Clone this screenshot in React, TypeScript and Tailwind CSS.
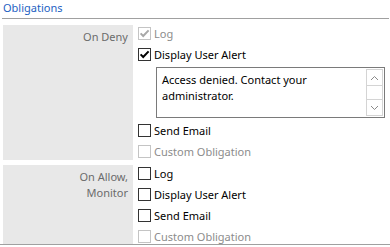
import React from 'react';

const Check: React.FC<{ checked?: boolean; disabled?: boolean; label: string }> = ({ checked, disabled, label }) => (
  <div className="flex h-[21px] items-center">
    <span
      className={`relative flex h-[13px] w-[13px] shrink-0 items-center justify-center border bg-white ${
        disabled ? 'border-[#c4c4c4]' : 'border-[#333333]'
      }`}
    >
      {checked && (
        <svg width="11" height="11" viewBox="0 0 11 11" className="absolute left-0 top-0">
          <path
            d="M1.6 5.4 L4.2 8 L9.6 2.4"
            fill="none"
            stroke={disabled ? '#a8a8a8' : '#000000'}
            strokeWidth="2"
          />
        </svg>
      )}
    </span>
    <span className={`ml-[3px] leading-4 ${disabled ? 'text-[#8c8c8c]' : 'text-black'}`}>{label}</span>
  </div>
);

const Chevron: React.FC<{ up?: boolean }> = ({ up }) => (
  <svg width="9" height="6" viewBox="0 0 9 6">
    <path d={up ? 'M1 5 L4.5 1.5 L8 5' : 'M1 1 L4.5 4.5 L8 1'} fill="none" stroke="#8a8a8a" strokeWidth="1" />
  </svg>
);

const AlertText: React.FC = () => (
  <div className="mb-[2px] ml-[18px] mr-[5px] mt-[2px] flex h-[51px] border border-[#7a7a7a] bg-white">
    <div className="flex-1 px-[5px] pt-[4px] leading-4 text-black">
      Access denied. Contact your administrator.
    </div>
    <div className="my-px mr-px flex w-[17px] flex-col border border-[#d4d4d4]">
      <div className="flex h-[16px] items-center justify-center border-b border-[#d4d4d4]">
        <Chevron up />
      </div>
      <div className="flex-1" />
      <div className="flex h-[16px] items-center justify-center border-t border-[#d4d4d4]">
        <Chevron />
      </div>
    </div>
  </div>
);

const Section: React.FC<{ label: React.ReactNode; className?: string; children: React.ReactNode }> = ({
  label,
  className,
  children,
}) => (
  <div className={`flex ${className ?? ''}`}>
    <div className="my-[2px] w-[130px] shrink-0 bg-[#e8e8e8] pr-[5px] pt-[4px] text-right leading-4 text-[#6b6b6b]">
      {label}
    </div>
    <div className="flex-1 pl-[5px]">{children}</div>
  </div>
);

export default function App() {
  return (
    <div className="flex h-[247px] w-[390px] flex-col overflow-hidden bg-white font-['Noto_Sans',sans-serif] text-[11px]">
      <div className="px-[3px] leading-4 text-[#1c5fc2]">Obligations</div>
      <div className="ml-[2px] mt-[2px] h-px w-[387px] bg-[#a0a0a0]" />
      <div className="min-h-0 flex-1 overflow-hidden pl-[3px] pt-[4px]">
        <Section label="On Deny">
          <Check checked disabled label="Log" />
          <Check checked label="Display User Alert" />
          <AlertText />
          <Check label="Send Email" />
          <Check disabled label="Custom Obligation" />
        </Section>
        <Section
          className="mt-px"
          label={
            <>
              <div>On Allow,</div>
              <div>Monitor</div>
            </>
          }
        >
          <Check label="Log" />
          <Check label="Display User Alert" />
          <Check label="Send Email" />
          <Check disabled label="Custom Obligation" />
        </Section>
      </div>
      <div className="h-px bg-[#a0a0a0]" />
      <div className="h-[2px]" />
    </div>
  );
}
